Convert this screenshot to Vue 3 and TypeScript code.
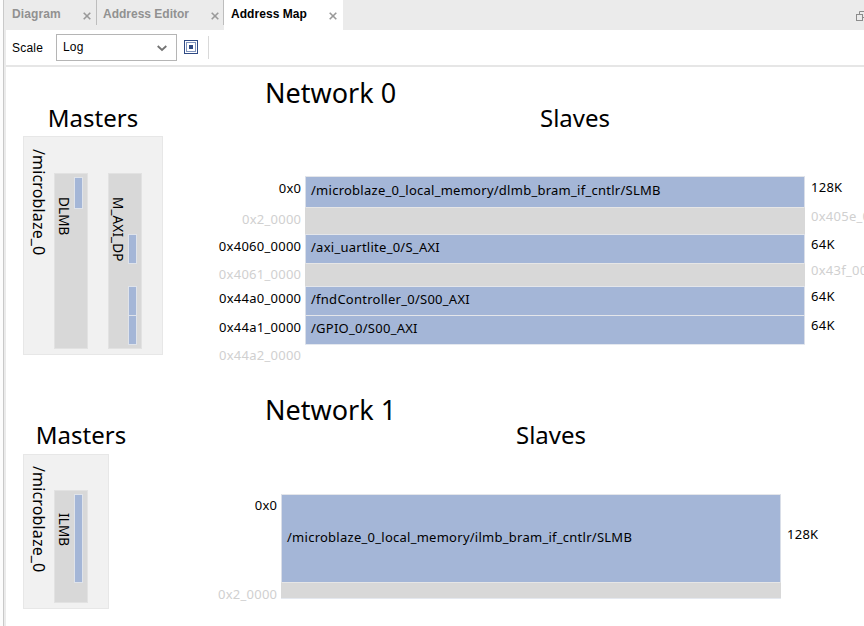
<script setup lang="ts">
interface Block {
  height: number
  address: string
  name?: string
  size?: string
}

interface Chip {
  gap: number
  height: number
}

interface Port {
  name: string
  chips: Chip[]
}

interface Network {
  key: string
  title: string
  ports: Port[]
  blocks: Block[]
  end?: string
}

const tabs = [
  { key: 'diagram', label: 'Diagram', active: false },
  { key: 'editor', label: 'Address Editor', active: false },
  { key: 'map', label: 'Address Map', active: true },
]

const networks: Network[] = [
  {
    key: 'net0',
    title: 'Network 0',
    ports: [
      { name: 'DLMB', chips: [{ gap: 0, height: 32 }] },
      {
        name: 'M_AXI_DP',
        chips: [
          { gap: 57, height: 30 },
          { gap: 22, height: 30 },
          { gap: -1, height: 30 },
        ],
      },
    ],
    blocks: [
      { height: 31, address: '0x0', name: '/microblaze_0_local_memory/dlmb_bram_if_cntlr/SLMB', size: '128K' },
      { height: 27, address: '0x2_0000', size: '0x405e_0000' },
      { height: 29, address: '0x4060_0000', name: '/axi_uartlite_0/S_AXI', size: '64K' },
      { height: 23, address: '0x4061_0000', size: '0x43f_0000' },
      { height: 29, address: '0x44a0_0000', name: '/fndController_0/S00_AXI', size: '64K' },
      { height: 29, address: '0x44a1_0000', name: '/GPIO_0/S00_AXI', size: '64K' },
    ],
    end: '0x44a2_0000',
  },
  {
    key: 'net1',
    title: 'Network 1',
    ports: [{ name: 'ILMB', chips: [{ gap: 0, height: 89 }] }],
    blocks: [
      { height: 88, address: '0x0', name: '/microblaze_0_local_memory/ilmb_bram_if_cntlr/SLMB', size: '128K' },
      { height: 16, address: '0x2_0000' },
    ],
  },
]
</script>

<template>
  <div class="window">
    <div class="edge"></div>
    <main class="pane">
      <nav class="tabs">
        <div v-for="t in tabs" :key="t.key" class="tab" :class="[t.key, { active: t.active }]">
          <span class="tab-label">{{ t.label }}</span>
          <svg class="close" width="8" height="8" viewBox="0 0 8 8">
            <path d="M0.7 0.7L7.3 7.3M7.3 0.7L0.7 7.3" />
          </svg>
        </div>
        <svg class="float" width="8" height="10" viewBox="0 0 8 10">
          <path d="M3.5 3V0.5H9M6 6.5H9" />
          <rect x="0.5" y="3.5" width="6" height="6" />
        </svg>
      </nav>

      <div class="toolbar">
        <span class="scale">Scale</span>
        <div class="select">
          <span>Log</span>
          <svg width="10" height="7" viewBox="0 0 10 7"><path d="M0.7 1L5 5L9.3 1" /></svg>
        </div>
        <svg class="fit" width="14" height="14" viewBox="0 0 14 14">
          <rect x="0.5" y="0.5" width="13" height="13" class="dark" />
          <rect x="2.5" y="2.5" width="9" height="9" class="soft" />
          <rect x="5" y="5" width="4" height="4" class="core" />
        </svg>
        <i class="divider"></i>
      </div>

      <section v-for="n in networks" :key="n.key" class="network" :class="n.key">
        <h1>{{ n.title }}</h1>
        <div class="headings">
          <h2 class="h-masters">Masters</h2>
          <h2 class="h-slaves">Slaves</h2>
        </div>
        <div class="content">
          <div class="master">
            <span class="master-name">/microblaze_0</span>
            <div v-for="p in n.ports" :key="p.name" class="port">
              <span class="port-name">{{ p.name }}</span>
              <div class="chips">
                <div
                  v-for="(c, i) in p.chips"
                  :key="i"
                  class="chip"
                  :style="{ marginTop: c.gap + 'px', height: c.height + 'px' }"
                ></div>
              </div>
            </div>
          </div>
          <div class="slaves">
            <div
              v-for="b in n.blocks"
              :key="b.address"
              class="row"
              :class="{ free: !b.name }"
              :style="{ height: b.height + 'px' }"
            >
              <span class="address">{{ b.address }}</span>
              <div class="block"><span>{{ b.name }}</span></div>
              <span class="size">{{ b.size }}</span>
            </div>
            <div class="row free end">
              <span class="address">{{ n.end }}</span>
              <div class="cap"></div>
            </div>
          </div>
        </div>
      </section>
    </main>
  </div>
</template>

<style>
body {
  background: #fff;
  overflow: hidden;
}
</style>

<style scoped>
.window {
  display: flex;
  width: 864px;
  height: 626px;
  overflow: hidden;
  background: #fff;
  color: #000;
  font-family: "Noto Sans", "Open Sans", sans-serif;
}
.edge {
  box-sizing: border-box;
  width: 6px;
  flex: none;
  background: #ebebeb;
  border-left: 3px solid #fcfcfc;
  box-shadow: inset 1px 0 #c9c9c9;
}
.pane {
  width: 858px;
  flex: none;
}
.tabs {
  display: flex;
  height: 30px;
  background: #ebebeb;
  font: bold 12px/28px "Liberation Sans", Arial, sans-serif;
}
.tab {
  box-sizing: border-box;
  display: flex;
  justify-content: space-between;
  padding: 0 5px 0 6px;
  height: 30px;
  color: #919191;
}
.tab-label {
  white-space: nowrap;
}
.diagram {
  width: 91px;
  padding-right: 6px;
  letter-spacing: 0.1px;
}
.editor { width: 127px; }
.diagram,
.editor {
  background: linear-gradient(#bdbdbd, #bdbdbd) right top / 1px 25px no-repeat;
}
.map { width: 119px; padding-left: 7px; padding-right: 6px; }
.active {
  background: #fff;
  color: #000;
  letter-spacing: 0.05px;
}
.close {
  margin-top: 12px;
}
.close path {
  stroke: #999;
  stroke-width: 1.6;
  fill: none;
}
.float {
  margin: 11px 0 0 auto;
}
.float path,
.float rect {
  fill: #ebebeb;
  stroke: #8c8c8c;
}
.toolbar {
  box-sizing: border-box;
  display: flex;
  align-items: flex-start;
  height: 37px;
  padding: 4px 0 0 6px;
  border-bottom: 2px solid #e6e6e6;
  font: 12px/27px "Liberation Sans", Arial, sans-serif;
}
.scale {
  width: 44px;
  line-height: 28px;
  letter-spacing: 0.2px;
}
.select {
  box-sizing: border-box;
  display: flex;
  justify-content: space-between;
  align-items: center;
  width: 121px;
  height: 27px;
  padding: 0 9px 0 6px;
  border: 1px solid #b5b5b5;
  line-height: 24px;
}
.select path {
  fill: none;
  stroke: #737373;
  stroke-width: 1.8;
}
.select span {
  margin-top: -2px;
  letter-spacing: 0.2px;
}
.select svg {
  margin-top: 2px;
}
.fit {
  margin: 6px 10px 0 7px;
}
.dark { fill: #fff; stroke: #2f4a84; }
.soft { fill: #fff; stroke: #8094bd; }
.core { fill: #2f4a84; }
.divider {
  width: 1px;
  height: 23px;
  margin-top: 2px;
  background: #d9d9d9;
}
.network {
  height: 317px;
}
h1,
h2 {
  margin: 0;
  font-weight: 400;
  white-space: nowrap;
}
h1 {
  height: 38px;
  padding: 6px 0 0 259px;
  box-sizing: border-box;
  font-size: 27px;
  line-height: 40px;
}
.headings {
  display: flex;
  height: 32px;
}
h2 {
  font-size: 24px;
  line-height: 25px;
  text-align: center;
  flex: none;
}
.h-masters { width: 174px; }
.h-slaves { width: 790px; }
.net1 .h-masters { width: 150px; }
.content {
  display: flex;
  align-items: flex-start;
}
.master {
  box-sizing: border-box;
  display: flex;
  flex: none;
  width: 140px;
  height: 219px;
  margin-left: 17px;
  margin-top: -1px;
  background: #f1f1f1;
  border: 1px solid #e7e7e7;
}
.net1 .master {
  width: 86px;
  height: 155px;
  margin-top: 0;
}
.master-name,
.port-name {
  writing-mode: vertical-rl;
  white-space: nowrap;
}
.master-name {
  width: 22px;
  margin: 12px 4px 0 4px;
  font-size: 16px;
  line-height: 22px;
  letter-spacing: 0.15px;
  flex: none;
}
.net1 .master-name {
  margin-top: 11px;
}
.port {
  box-sizing: border-box;
  display: flex;
  flex: none;
  width: 34px;
  height: 176px;
  margin: 36px 20px 0 0;
  background: #d8d8d8;
  border: 1px solid #e2e2e2;
}
.net1 .port {
  height: 113px;
  margin-top: 35px;
}
.port-name {
  flex: none;
  width: 17px;
  margin: 23px 2px 0 0;
  font-size: 13.5px;
  line-height: 17px;
  letter-spacing: 0.15px;
}
.net1 .port-name {
  margin-top: 22px;
}
.chips {
  padding-top: 3px;
}
.chip {
  box-sizing: border-box;
  width: 9px;
  background: #a4b6d7;
  border: 1px solid #dfe3ea;
}
.slaves {
  margin-top: 39px;
  margin-left: 42px;
  font-size: 13px;
  letter-spacing: 0.26px;
}
.net1 .slaves {
  margin-top: 40px;
  margin-left: 72px;
}
.row {
  display: flex;
  white-space: nowrap;
}
.address {
  width: 96.3px;
  margin-right: -0.3px;
  padding-right: 4px;
  text-align: right;
  line-height: 25px;
}
.net1 .address,
.end .address {
  line-height: 23px;
}
.net1 .free .address {
  line-height: 24px;
}
.block {
  box-sizing: border-box;
  display: flex;
  align-items: center;
  width: 500px;
  padding: 0 0 4px 5px;
  background: #a4b6d7;
  border: 1px solid #d9dee8;
  border-top-color: #e4e6ea;
  border-bottom: 0;
}
.size {
  padding-left: 6px;
  line-height: 20px;
}
.row:first-child .size {
  line-height: 22px;
}
.net1 .row:first-child .size {
  line-height: 80px;
}
.free {
  color: #d0d0d0;
}
.net0 .free .size {
  line-height: 18px;
}
.net0 .row:nth-child(4) .size {
  line-height: 15px;
}
.net0 .row:nth-child(4) .address {
  line-height: 23px;
}
.free .block {
  background: #d8d8d8;
  border-color: #e6e6e6 #d8d8d8;
}
.cap {
  width: 500px;
  height: 1px;
  background: #e4e8ef;
}
</style>
